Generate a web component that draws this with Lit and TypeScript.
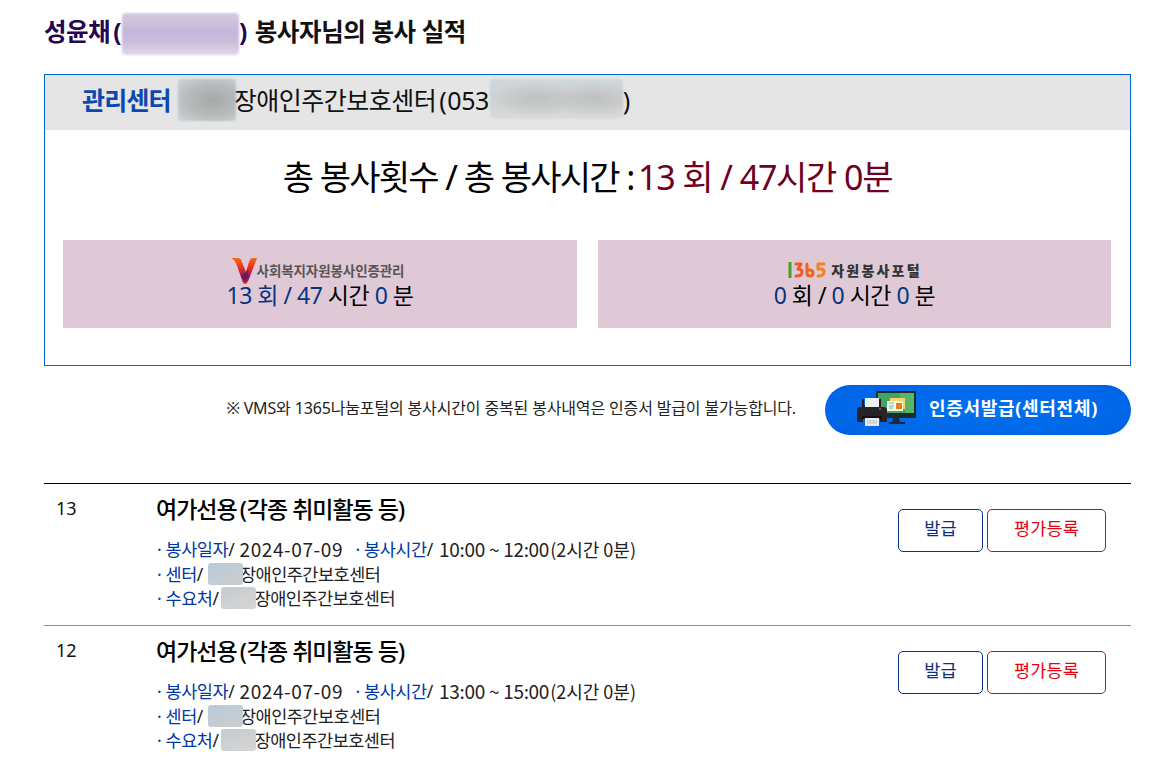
import { html, css, LitElement } from 'lit';
import { customElement, property } from 'lit/decorators.js';

interface Activity {
  no: number;
  title: string;
  date: string;
  time: string;
  hours: string;
  center: string;
}

const activities: Activity[] = [
  { no: 13, title: '각종 취미활동 등', date: '2024-07-09', time: '10:00 ~ 12:00', hours: '2시간 0분', center: '장애인주간보호센터' },
  { no: 12, title: '각종 취미활동 등', date: '2024-07-09', time: '13:00 ~ 15:00', hours: '2시간 0분', center: '장애인주간보호센터' },
];

@customElement('activity-row')
export class ActivityRow extends LitElement {
  static styles = css`
    :host {
      display: flex;
      box-sizing: border-box;
      height: 142px;
      border-bottom: 1px solid #8c8c8c;
    }

    .no {
      width: 100px;
      padding: 11px 0 0 12px;
      font-size: 18px;
      line-height: 26px;
    }

    .info {
      flex: 1;
      padding-top: 9px;
    }

    .title {
      font-size: 23px;
      font-weight: 500;
      line-height: 32px;
      letter-spacing: -1px;
      color: #000;
      margin-bottom: 12px;
    }

    .open {
      margin-left: 3px;
      margin-right: 1px;
    }

    .line {
      display: flex;
      height: 24.5px;
      padding-left: 1px;
      line-height: 24.5px;
      font-size: 17.5px;
      letter-spacing: -0.4px;
      color: #222;
      white-space: pre;
    }

    .label {
      color: #0037a5;
    }

    .num {
      margin-left: 1px;
      font-family: 'Noto Sans CJK KR', sans-serif;
      font-size: 19px;
      letter-spacing: 0.6px;
    }

    .time {
      margin-left: 2px;
      letter-spacing: -0.3px;
    }

    .hours {
      font-family: 'Noto Sans CJK KR', sans-serif;
      font-size: 18px;
      margin-left: 1px;
      letter-spacing: 0;
    }

    .mask {
      height: 22px;
      margin-top: 1px;
      border-radius: 3px;
      background: linear-gradient(160deg, #bacbd8, #cbcdcf);
      filter: blur(0.6px);
    }

    .mask.center {
      width: 35px;
      margin-left: 5px;
      margin-right: -3px;
    }

    .mask.place {
      width: 35px;
      margin-left: 2px;
      margin-right: -1px;
      background: linear-gradient(160deg, #c7cbcf, #d5d5d5);
    }

    .center-name {
      letter-spacing: -0.5px;
    }

    .buttons {
      display: flex;
      gap: 4px;
      padding: 25px 25px 0 0;
    }

    button {
      box-sizing: border-box;
      width: 85px;
      height: 43px;
      padding: 0 0 6px;
      border: 1px solid #0a2f7c;
      border-radius: 5px;
      background: #fff;
      color: #0a2f7c;
      font-family: inherit;
      font-size: 17.5px;
      letter-spacing: 0.2px;
    }

    button.rate {
      width: 119px;
      border-color: #e60012;
      color: #e60012;
    }
  `;

  @property({ attribute: false }) item!: Activity;

  render() {
    const { no, title, date, time, hours, center } = this.item;
    return html`
      <div class="no">${no}</div>
      <div class="info">
        <div class="title">여가선용<span class="open">(</span>${title})</div>
        <div class="line"><span class="label">· 봉사일자</span><span>/ </span><span class="num">${date}</span><span class="label">   · 봉사시간</span><span>/ </span><span class="num time">${time}</span><span class="hours">(${hours})</span></div>
        <div class="line"><span class="label">· 센터</span><span>/</span><span class="mask center"></span><span class="center-name">${center}</span></div>
        <div class="line"><span class="label">· 수요처</span><span>/</span><span class="mask place"></span><span class="center-name">${center}</span></div>
      </div>
      <div class="buttons">
        <button>발급</button>
        <button class="rate">평가등록</button>
      </div>
    `;
  }
}

@customElement('app-root')
export class AppRoot extends LitElement {
  static styles = css`
    :host {
      display: block;
      box-sizing: border-box;
      width: 1167px;
      height: 762px;
      padding: 12px 36px 0 44px;
      overflow: hidden;
      background: #fff;
      color: #111;
      font-family: 'Noto Sans', 'Noto Sans CJK KR', sans-serif;
    }

    .heading {
      display: flex;
      height: 62px;
      margin: 0;
      font-size: 24.5px;
      font-weight: 700;
      line-height: 40px;
      letter-spacing: -0.5px;
      white-space: pre;
    }

    .name {
      color: #240653;
    }

    .open {
      margin-left: 3px;
      margin-right: 1px;
    }

    .subject {
      margin-left: 2px;
      letter-spacing: -0.4px;
    }

    .id-mask {
      width: 117px;
      height: 42px;
      margin: 1px 0 0;
      border-radius: 4px;
      background: linear-gradient(#d6c9df, #c5b7da 45%, #cbbddc 70%, #e0d9ec);
      filter: blur(0.8px);
    }

    .panel {
      box-sizing: border-box;
      height: 292px;
      border: 1px solid #0067d5;
    }

    .manager {
      display: flex;
      height: 55px;
      padding-left: 37px;
      background: #e5e5e5;
      font-size: 25px;
      line-height: 50px;
      letter-spacing: -0.5px;
    }

    .manager b {
      color: #0d47b0;
      letter-spacing: -0.8px;
    }

    .center-mask {
      width: 58px;
      height: 42px;
      margin: 4px -2px 0 7px;
      border-radius: 4px;
      background: radial-gradient(at 60% 50%, #a6a8a8, #b9bcbd 55%, #ccd4d9);
      filter: blur(1px);
    }

    .phone-mask {
      width: 133px;
      height: 40px;
      margin: 4px 0 0 1px;
      border-radius: 4px;
      background:
        radial-gradient(45px 18px at 35% 50%, #bfc0c0, rgba(191, 192, 192, 0)),
        radial-gradient(45px 18px at 78% 50%, #bfc0c0, rgba(191, 192, 192, 0)),
        linear-gradient(#cfd8dd, #cfd1d2 50%, #dadada);
      filter: blur(1px);
    }

    .total {
      height: 110px;
      text-align: center;
      font-size: 34px;
      line-height: 94px;
      letter-spacing: -1.8px;
      word-spacing: 0.5px;
      color: #000;
    }

    .total em {
      margin-left: -3px;
      font-style: normal;
      letter-spacing: -1.3px;
      color: #6e0022;
    }

    .cards {
      display: grid;
      grid-template-columns: 514px 513px;
      gap: 21px;
      padding-left: 18px;
    }

    .card {
      height: 88px;
      background: #e0c9d6;
      display: flex;
      flex-direction: column;
      align-items: center;
    }

    .logo {
      display: flex;
      height: 26px;
      padding-top: 17px;
    }

    .vms-logo {
      margin-left: -1px;
      margin-right: 6px;
      font-size: 13.5px;
      font-weight: 700;
      line-height: 28px;
      letter-spacing: -0.1px;
      color: #555;
    }

    .portal-mark {
      margin-top: 4px;
    }

    .portal-logo {
      margin-left: 4px;
      font-size: 14px;
      font-weight: 900;
      line-height: 28px;
      letter-spacing: 2.2px;
      color: #333;
    }

    .count {
      height: 24px;
      font-size: 23px;
      line-height: 24px;
      letter-spacing: -0.5px;
      color: #000;
    }

    .count i {
      font-style: normal;
      color: #053580;
    }

    .issue {
      display: flex;
      justify-content: flex-end;
      height: 117px;
      padding-top: 19px;
      box-sizing: border-box;
    }

    .notice {
      margin-right: 29px;
      font-size: 16px;
      line-height: 46px;
      letter-spacing: -0.15px;
      color: #222;
    }

    .issue-button {
      box-sizing: border-box;
      display: flex;
      width: 306px;
      height: 50px;
      padding: 0 0 0 31px;
      border: 0;
      border-radius: 25px;
      background: radial-gradient(#0071ee, #0067e8 70%, #0060e2);
      color: #fff;
      font-family: inherit;
      font-size: 18px;
      font-weight: 700;
      line-height: 46px;
      letter-spacing: 0.7px;
    }

    .issue-button svg {
      margin: 5px 13px 0 0;
    }

    .list {
      border-top: 1px solid #000;
    }
  `;

  vmsMark() {
    return html`
      <svg width="28" height="28" viewBox="0 0 28 28">
        <defs>
          <linearGradient id="v" x1="0" y1="0" x2="0" y2="1">
            <stop offset="0" stop-color="#f36b16" />
            <stop offset="0.35" stop-color="#ed3320" />
            <stop offset="0.75" stop-color="#7c195f" />
            <stop offset="1" stop-color="#e42e24" />
          </linearGradient>
        </defs>
        <path d="M1 1H8Q11 1 12 5L16 15L19 5Q20 1 23 1H27L19 22Q17 27 15 27Q13 27 12 23L6 6Q4 2 1 1Z" fill="url(#v)" />
        <path d="M12 18L16 15L18 12L18 20L15 25Z" fill="#57195f" opacity="0.7" />
      </svg>
    `;
  }

  portalMark() {
    return html`
      <svg class="portal-mark" width="40" height="18" viewBox="0 0 40 18" fill="none" stroke-width="3" stroke-linecap="round" stroke-linejoin="round">
        <path d="M3 1V17" stroke="#43a51c" stroke-linecap="butt" />
        <path d="M9 3H14L11 8Q15 8 15 11Q15 15 9 15" stroke="#f05a25" />
        <path d="M20 3V12Q20 15 23 15Q26 15 26 12Q26 9 22 9" stroke="#ee651d" />
        <path d="M37 3H31V8H34Q37 8 37 11Q37 15 31 15" stroke="#f58220" />
      </svg>
    `;
  }

  printerIcon() {
    return html`
      <svg width="60" height="37" viewBox="0 0 60 37">
        <rect x="20" y="1" width="40" height="27" rx="1" fill="#20292c" />
        <path d="M22 3H58V23H22Z" fill="#41a463" />
        <path d="M43 3H58V23H50Z" fill="#57b567" />
        <path d="M37 28H43L44 32H49V34H33V32H36Z" fill="#1b2a3a" />
        <rect x="34" y="8" width="15" height="11" fill="#f6d46b" />
        <rect x="31" y="11" width="16" height="10" fill="#f2f8e8" />
        <rect x="40" y="13" width="6" height="6" fill="#f07a22" />
        <path d="M33 13H38M33 16H38M33 18H37" stroke="#65b6b0" />
        <path d="M1 19L3 17H7V15H24V17H29L31 19V32H24V28H7V32H1Z" fill="#252528" />
        <path d="M9 8H23V17H9Z" fill="#edf0f5" />
        <path d="M6 9H8V17H6ZM23 9H25V17H23Z" fill="#202024" />
        <circle cx="24" cy="19" r="1" fill="#e64038" />
        <path d="M6 26H26V29H6Z" fill="#111114" />
        <path d="M9 28H23V36H9Z" fill="#e6e9ee" />
        <path d="M11 31H21M11 33H21" stroke="#bfc3c9" />
      </svg>
    `;
  }

  render() {
    return html`
      <h2 class="heading"><span class="name">성윤채<span class="open">(</span></span><span class="id-mask"></span><span class="name">)</span><span class="subject"> 봉사자님의 봉사 실적</span></h2>
      <section class="panel">
        <div class="manager"><b>관리센터</b><span class="center-mask"></span><span>장애인주간보호센터<span class="open">(</span>053</span><span class="phone-mask"></span><span>)</span></div>
        <div class="total">총 봉사횟수 / 총 봉사시간 : <em>13 회 / 47시간 0분</em></div>
        <div class="cards">
          <div class="card">
            <div class="logo">${this.vmsMark()}<span class="vms-logo">사회복지자원봉사인증관리</span></div>
            <div class="count"><i>13 회 / 47</i> 시간 <i>0</i> 분</div>
          </div>
          <div class="card">
            <div class="logo">${this.portalMark()}<span class="portal-logo">자원봉사포털</span></div>
            <div class="count"><i>0</i> 회 / <i>0</i> 시간 <i>0</i> 분</div>
          </div>
        </div>
      </section>
      <div class="issue">
        <span class="notice">※ VMS와 1365나눔포털의 봉사시간이 중복된 봉사내역은 인증서 발급이 불가능합니다.</span>
        <button class="issue-button">${this.printerIcon()}<span>인증서발급(센터전체)</span></button>
      </div>
      <div class="list">${activities.map((item) => html`<activity-row .item=${item}></activity-row>`)}</div>
    `;
  }
}
